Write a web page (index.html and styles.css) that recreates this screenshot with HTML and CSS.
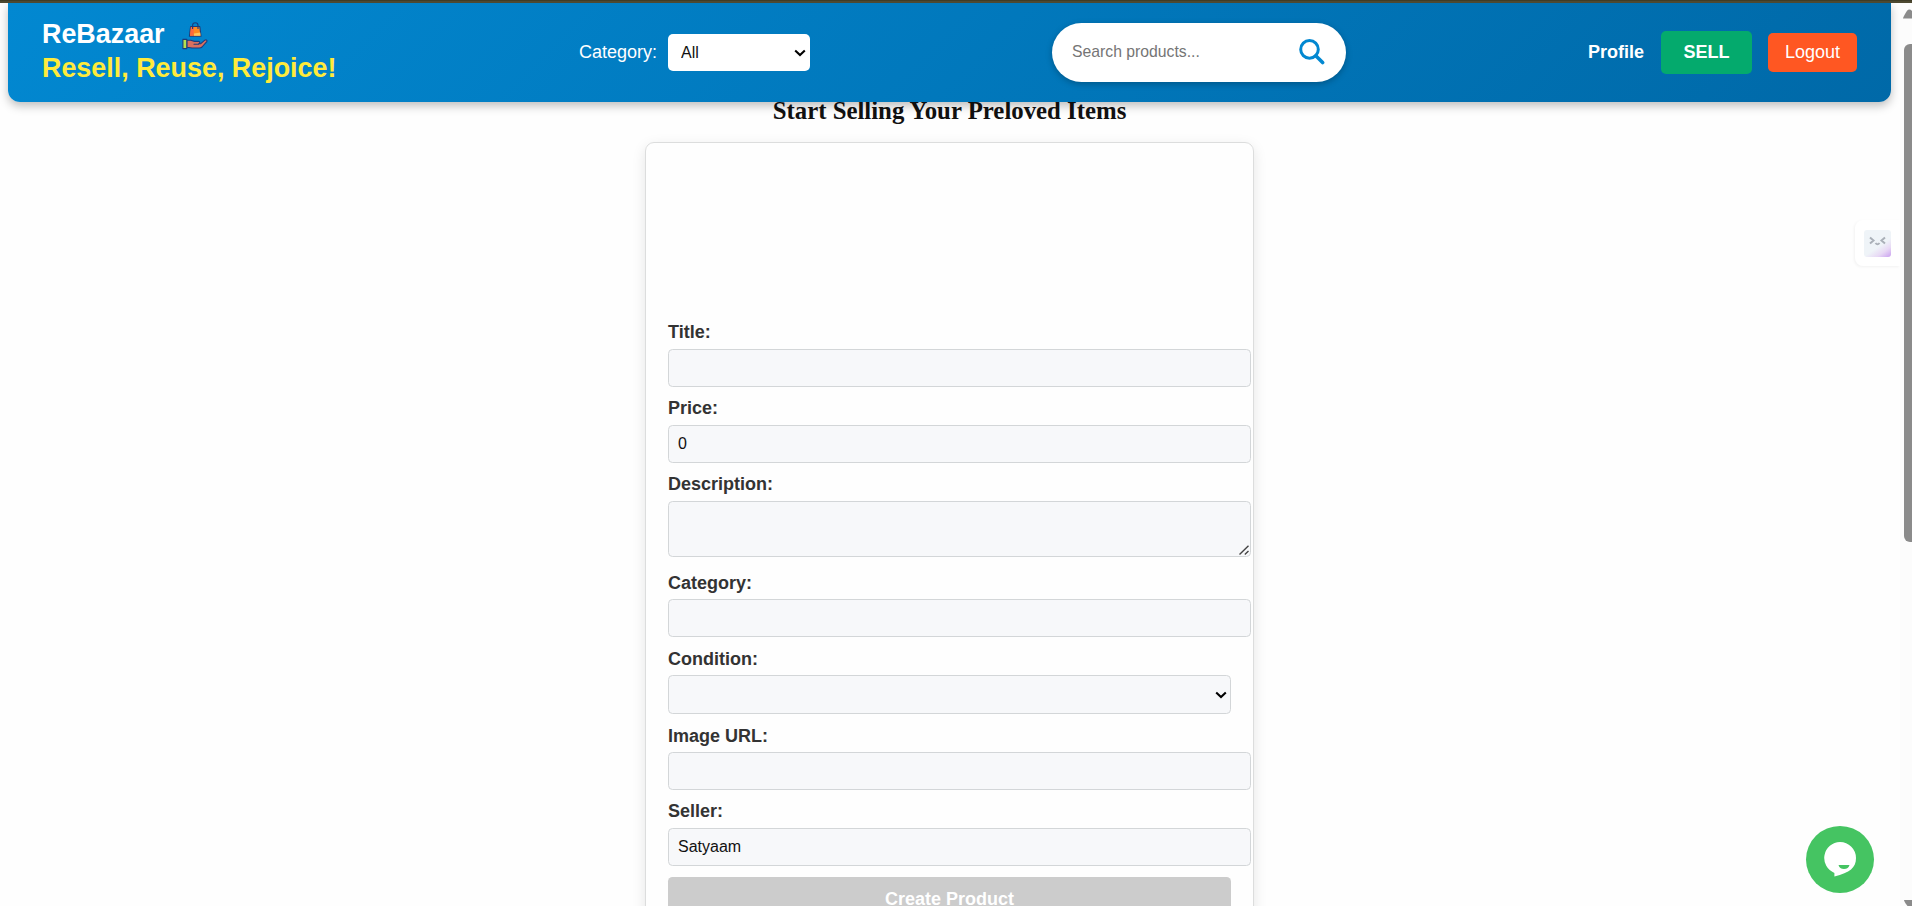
FILE: index.html
```html
<!DOCTYPE html>
<html lang="en">
<head>
<meta charset="utf-8">
<title>ReBazaar</title>
<link rel="stylesheet" href="styles.css">
</head>
<body>
<div class="topstrip"></div>
<div class="viewport">
  <div class="page">
    <header class="navbar">
      <div class="brand">
        <div class="brand-name">ReBazaar
          <svg class="brand-icon" viewBox="0 0 26 28" fill="none" stroke="#1c3b7c" stroke-width="1.1" stroke-linejoin="round" stroke-linecap="round">
            <path d="M8.6 4.5 17.8 4.5 19 14.2H7.4z" fill="#ff8a1f"/>
            <path d="M8.8 5 12 5 11.5 13.7H8z" fill="#ff6a3c" stroke="none"/>
            <path d="M12 11.5 18.3 10.5 18.6 13.8H12z" fill="#ffc65a" stroke="none"/>
            <path d="M10.6 6.5V3.4a2.7 2.7 0 0 1 5.4 0V6.5"/>
            <path d="M4.8 18.2h3.8l4 1.2h4c1.6 0 1.6 2.2 0 2.4l2.2-.2 4-3.4c1.4-1 2.8.3 1.8 1.6L20 25q-1 1-2.6 1H10l-5.2-.8z" fill="#d9705f"/>
            <path d="M12 22.2h4.6"/>
            <path d="M.9 17.4h3.9v9.2H.9z" fill="#b5e04e"/>
          </svg>
        </div>
        <div class="brand-tag">Resell, Reuse, Rejoice!</div>
      </div>
      <div class="filter">
        <label class="filter-label" for="cat">Category:</label>
        <div class="select-wrap">
          <select class="filter-select" id="cat"><option>All</option></select>
          <svg class="chevron" viewBox="0 0 12 8"><path d="M1.200 1.500 6 6 10.800 1.500"/></svg>
        </div>
      </div>
      <div class="search">
        <input class="search-input" type="text" placeholder="Search products...">
        <svg class="search-icon" viewBox="0 0 26 26" fill="none" stroke="#0288d1" stroke-width="3">
          <circle cx="10.5" cy="10.4" r="8.8"/>
          <path d="M16.8 16.8 23.6 23.6" stroke-width="3.6" stroke-linecap="round"/>
        </svg>
      </div>
      <nav class="actions">
        <a class="profile">Profile</a>
        <button class="sell">SELL</button>
        <button class="logout">Logout</button>
      </nav>
    </header>
    <h2 class="title">Start Selling Your Preloved Items</h2>
    <form class="card">
      <label class="label raised">Title:</label>
      <input class="field" type="text">
      <label class="label raised">Price:</label>
      <input class="field" type="text" value="0">
      <label class="label raised">Description:</label>
      <div class="area-wrap">
        <textarea class="field area"></textarea>
        <svg class="grip" viewBox="0 0 10 10"><path d="M.5 9.500 9.500.800M5.800 9.500 9.500 6"/></svg>
      </div>
      <label class="label">Category:</label>
      <input class="field" type="text">
      <label class="label">Condition:</label>
      <div class="select-wrap choice-wrap">
        <select class="field choice"><option></option></select>
        <svg class="chevron" viewBox="0 0 12 8"><path d="M1.200 1.500 6 6 10.800 1.500"/></svg>
      </div>
      <label class="label">Image URL:</label>
      <input class="field" type="text">
      <label class="label raised">Seller:</label>
      <input class="field" type="text" value="Satyaam">
      <button class="submit" type="button">Create Product</button>
    </form>
  </div>
  <div class="scrollbar">
    <svg class="arrow" viewBox="0 0 9 10"><path d="M0 9.500Q0 8.300 4 1.800Q6.300-.8 9 2V9.500z" fill="#8b8b8b"/></svg>
    <div class="thumb"></div>
    <svg class="arrow-down" viewBox="0 0 9 6"><path d="M0 0H9V6H3.500Q0 1.500 0 0z" fill="#8b8b8b"/></svg>
  </div>
</div>
<div class="helper">
  <svg class="face" viewBox="0 0 27 27" fill="none" stroke="#aab0b8" stroke-width="2">
    <path d="M6 7.500 9.500 10.500 6 13.500M21 7.500 17.500 10.500 21 13.500M11.500 13Q13.500 15.500 15.500 13"/>
  </svg>
</div>
<div class="chat">
  <svg class="bubble" viewBox="0 0 32 35">
    <path d="M16 0a16 16 0 0 1 16 16c0 10-6 14.200-21.600 18.600v-3.700A16 16 0 0 1 16 0z" fill="#fff"/>
    <path d="M14.500 23H25.500Q24.500 27 20 27T14.500 23z" fill="#45c462"/>
  </svg>
</div>
</body>
</html>
```

FILE: styles.css
```css
* { box-sizing: border-box; }
body {
  margin: 0;
  height: 906px;
  overflow: hidden;
  background: #fefefe;
  font-family: "Liberation Sans", Arial, sans-serif;
}
.topstrip {
  height: 3px;
  background: linear-gradient(#3f3c26 0 1px, #4d4931 1px);
}
.viewport { display: flex; height: 903px; }
.page { width: 1900px; padding: 0 9px 0 8px; overflow: hidden; }

.navbar {
  position: relative;
  z-index: 1;
  display: flex;
  align-items: center;
  height: 99px;
  padding: 0 34px;
  border-radius: 0 0 12px 12px;
  background: linear-gradient(135deg, #0288d1, #0069a8);
  box-shadow: 0 4px 10px rgba(0, 0, 0, .25);
}
.brand {
  width: 537px;
  padding-bottom: 3px;
  font-size: 26.9px;
  font-weight: bold;
  line-height: 34px;
  color: #fff;
}
.brand-name { display: flex; align-items: center; gap: 17px; }
.brand-icon { width: 26px; height: 28px; margin-top: 4px; }
.brand-tag { color: #ffeb3b; }
.filter { display: flex; align-items: center; width: 473px; gap: 11px; }
.filter-label { font-size: 18px; color: #fff; }
.select-wrap { position: relative; display: flex; }
.chevron {
  position: absolute;
  right: 4px;
  top: 50%;
  width: 12px;
  height: 8px;
  margin-top: -4px;
  fill: none;
  stroke: #000;
  stroke-width: 2.1;
  pointer-events: none;
}
.filter-select {
  width: 142px;
  height: 37px;
  padding: 0 13px;
  border: 0;
  border-radius: 5px;
  appearance: none;
  background: #fff;
  color: #111;
  font: 16px "Liberation Sans", Arial, sans-serif;
}
.search {
  display: flex;
  align-items: center;
  width: 294px;
  height: 59px;
  padding: 0 21px 0 20px;
  border-radius: 30px;
  background: #fff;
  box-shadow: 0 2px 6px rgba(0, 0, 0, .25);
}
.search-input {
  flex: 1;
  min-width: 0;
  padding: 0 0 2px;
  border: 0;
  outline: 0;
  font: 15.75px "Liberation Sans", Arial, sans-serif;
}
.search-input::placeholder { color: #757575; }
.search-icon { width: 26px; height: 26px; margin-top: -2px; }
.actions { display: flex; align-items: center; margin-left: auto; font-size: 18px; color: #fff; }
.profile { font-weight: bold; margin-right: 17px; }
.sell, .logout {
  border: 0;
  border-radius: 5px;
  color: #fff;
  font: 18px "Liberation Sans", Arial, sans-serif;
}
.sell { width: 91px; height: 43px; margin-right: 16px; background: #04aa6d; font-weight: bold; }
.logout { width: 89px; height: 39px; background: #ff5722; }

.title {
  margin: -5px 0 17px;
  text-align: center;
  font: bold 24.8px/28px "Liberation Serif", "Times New Roman", serif;
  color: #111;
}
.card {
  display: flex;
  flex-direction: column;
  width: 609px;
  height: 900px;
  margin: 0 auto;
  padding: 168px 22px 0;
  border: 1px solid #dcdddd;
  border-radius: 9px;
  box-shadow: 0 4px 14px rgba(0, 0, 0, .1);
}
.label {
  margin: 12px 0 6px;
  font-size: 18px;
  font-weight: bold;
  line-height: 20px;
  color: #333;
}
.raised { margin: 11px 0 7px; }
.field {
  width: 583px;
  height: 38px;
  flex: none;
  margin: 0;
  padding: 0 9px;
  border: 1px solid #d3d6d8;
  border-radius: 4.5px;
  background: #f7f8fa;
  color: #111;
  font: 16px "Liberation Sans", Arial, sans-serif;
}
.area-wrap { position: relative; display: flex; width: 583px; margin-bottom: 4px; }
.area { height: 56px; resize: none; }
.grip {
  position: absolute;
  right: 2px;
  bottom: 2px;
  width: 10px;
  height: 10px;
  fill: none;
  stroke: #444;
  stroke-width: 1.4;
}
.choice-wrap { width: 563px; }
.choice { width: 563px; height: 39px; appearance: none; }
.submit {
  width: 563px;
  height: 45px;
  flex: none;
  margin-top: 11px;
  border: 0;
  border-radius: 4.5px;
  background: #ccc;
  color: #fff;
  font: bold 18px "Liberation Sans", Arial, sans-serif;
}

.scrollbar {
  display: flex;
  flex-direction: column;
  width: 12px;
  padding: 6px 0 0 4px;
  background: #fcfcfc;
}
.arrow { width: 9px; height: 10px; margin: 0 0 25px -1px; }
.thumb { height: 498px; border-radius: 6px 0 0 6px; background: #8b8b8b; }
.arrow-down { width: 9px; height: 6px; margin-top: auto; }

.helper {
  position: absolute;
  z-index: 2;
  left: 1855px;
  top: 220px;
  width: 45px;
  height: 46px;
  padding: 10px 9px;
  border-radius: 8px 0 0 8px;
  background: #fff;
  box-shadow: -1px 1px 3px rgba(0, 0, 0, .05);
}
.face {
  display: block;
  width: 27px;
  height: 27px;
  border-radius: 3px;
  background: linear-gradient(145deg, #eff4f8 58%, #e8d9f5 78%, #c99ff0);
}
.chat {
  position: absolute;
  z-index: 2;
  left: 1806px;
  top: 826px;
  display: flex;
  justify-content: center;
  width: 68px;
  height: 67px;
  padding-top: 16px;
  border-radius: 50%;
  background: #45c462;
}
.bubble { width: 32px; height: 35px; }
```
